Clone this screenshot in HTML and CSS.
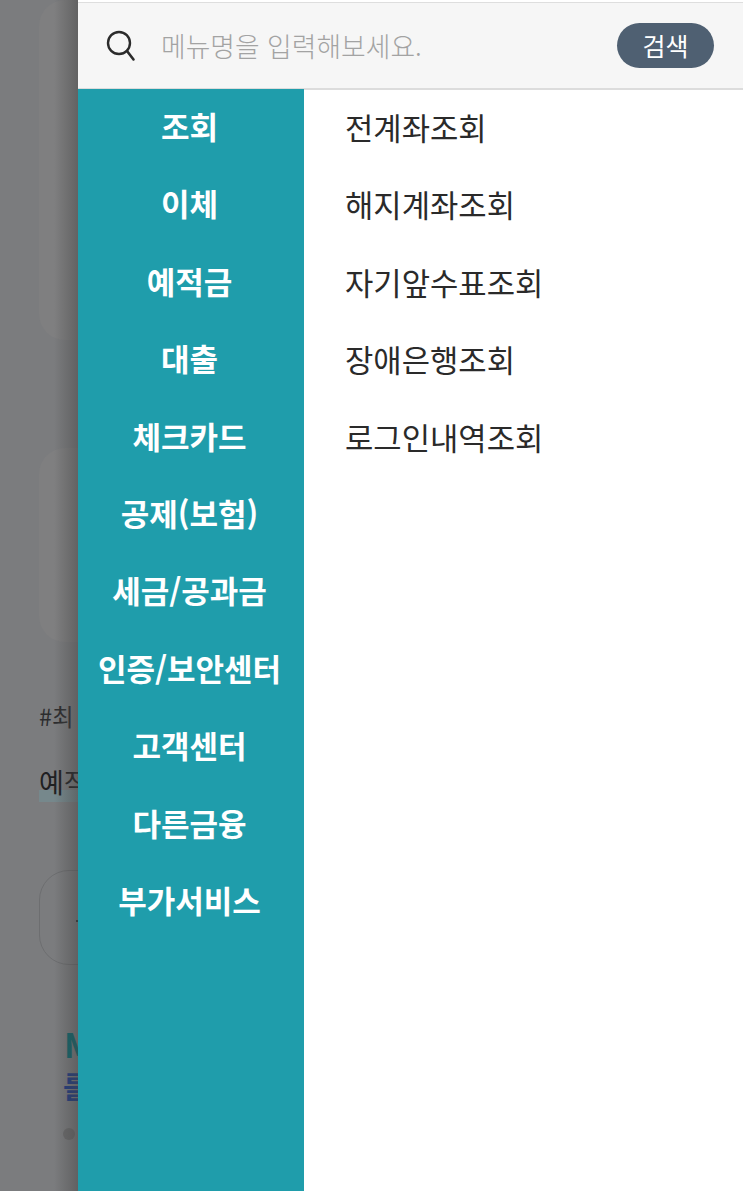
FILE: index.html
```html
<!DOCTYPE html>
<html lang="ko">
<head>
<meta charset="utf-8">
<title>전체메뉴</title>
<link rel="stylesheet" href="styles.css">
</head>
<body>
<div class="page">
  <div class="backdrop">
    <div class="card card-one"></div>
    <div class="card card-two"></div>
    <div class="tag">#최</div>
    <div class="title"><span class="mark">예적금</span></div>
    <div class="outline"><span class="outline-tick"></span></div>
    <div class="logo-top">M</div>
    <div class="logo-bottom">를</div>
    <div class="dot"></div>
  </div>
  <div class="drawer">
    <div class="search">
      <svg class="search-icon" viewBox="0 0 32 32" width="32" height="32" aria-hidden="true">
        <circle cx="14" cy="13" r="11" fill="none" stroke="#2b2b2b" stroke-width="2.4"/>
        <path d="M22 21 L28.5 29.5" fill="none" stroke="#2b2b2b" stroke-width="2.6" stroke-linecap="round"/>
      </svg>
      <span class="placeholder">메뉴명을 입력해보세요.</span>
      <span class="search-btn">검색</span>
    </div>
    <div class="columns">
      <nav class="side">
        <div class="side-item">조회</div>
        <div class="side-item">이체</div>
        <div class="side-item">예적금</div>
        <div class="side-item">대출</div>
        <div class="side-item">체크카드</div>
        <div class="side-item">공제(보험)</div>
        <div class="side-item">세금/공과금</div>
        <div class="side-item">인증/보안센터</div>
        <div class="side-item">고객센터</div>
        <div class="side-item">다른금융</div>
        <div class="side-item">부가서비스</div>
      </nav>
      <div class="sub">
        <div class="sub-item">전계좌조회</div>
        <div class="sub-item">해지계좌조회</div>
        <div class="sub-item">자기앞수표조회</div>
        <div class="sub-item">장애은행조회</div>
        <div class="sub-item">로그인내역조회</div>
      </div>
    </div>
  </div>
</div>
</body>
</html>
```
FILE: styles.css
```css
* { box-sizing: border-box; }
html, body { margin: 0; padding: 0; }
body {
  width: 743px;
  height: 1191px;
  overflow: hidden;
  font-family: "Noto Sans CJK KR", "Noto Sans", sans-serif;
}
.page { display: flex; width: 743px; height: 1191px; }

.backdrop {
  position: relative;
  flex: 0 0 78px;
  height: 1191px;
  overflow: hidden;
  background: #7b7c7e;
  padding-left: 39px;
  display: flex;
  flex-direction: column;
  align-items: flex-start;
}
.backdrop::after {
  content: "";
  position: absolute;
  top: 0;
  right: 0;
  bottom: 0;
  width: 24px;
  background: linear-gradient(to right, rgba(70,70,70,0), rgba(70,70,70,0.5));
}
.card { flex: none; width: 300px; background: #7f7f80; border-radius: 26px; }
.card-one { height: 340px; }
.card-two { height: 194px; margin-top: 108px; }
.tag {
  flex: none;
  margin-top: 59px;
  height: 30px;
  font-size: 23.5px;
  line-height: 30px;
  color: #2c2c2e;
  white-space: nowrap;
}
.title {
  flex: none;
  margin-top: 31px;
  height: 40px;
  width: 100px;
  font-size: 27px;
  line-height: 40px;
  color: #1f2022;
  white-space: nowrap;
}
.mark { background: linear-gradient(to bottom, transparent 0, transparent 70%, #76888c 70%, #76888c 100%); padding-bottom: 1px; }
.outline {
  flex: none;
  margin-top: 68px;
  width: 200px;
  height: 95px;
  border: 1px solid #6d6e70;
  border-radius: 30px;
  position: relative;
}
.outline-tick { position: absolute; left: 36px; top: 49px; width: 3px; height: 2px; background: #333; }
.logo-top {
  flex: none;
  margin-top: 61px;
  margin-left: 25px;
  height: 36px;
  font-size: 34px;
  line-height: 36px;
  font-weight: 700;
  color: #0b666c;
}
.logo-bottom {
  flex: none;
  margin-top: 6px;
  margin-left: 24px;
  height: 34px;
  font-size: 30px;
  line-height: 34px;
  font-weight: 700;
  color: #1e3a80;
}
.dot {
  flex: none;
  margin-top: 26px;
  margin-left: 24px;
  width: 12px;
  height: 12px;
  border-radius: 50%;
  background: #6b6b6c;
}

.drawer {
  flex: 1;
  height: 1191px;
  display: flex;
  flex-direction: column;
  background: #fff;
  padding-top: 2px;
}
.search {
  flex: none;
  height: 88px;
  display: flex;
  align-items: center;
  background: #f6f6f6;
  border-top: 1px solid #dedede;
  border-bottom: 2px solid #dcdcdc;
  padding: 0 29px 0 27px;
}
.search-icon { flex: none; width: 32px; height: 32px; }
.placeholder {
  flex: 1;
  margin-left: 24px;
  font-size: 26.8px;
  line-height: 40px;
  font-weight: 300;
  color: #a3a3a3;
  white-space: nowrap;
}
.search-btn {
  flex: none;
  width: 97px;
  height: 45px;
  border-radius: 23px;
  background: #4f6072;
  color: #fff;
  font-size: 25px;
  line-height: 44px;
  text-align: center;
  margin-top: -1px;
}
.columns { flex: 1; display: flex; min-height: 0; margin-top: -1px; }
.side {
  flex: none;
  width: 226px;
  background: #1f9dab;
}
.side-item {
  height: 77.4px;
  line-height: 73.4px;
  text-align: center;
  color: #fff;
  font-size: 31px;
  font-weight: 700;
  white-space: nowrap;
  padding-right: 3px;
}
.sub { flex: 1; padding-left: 41px; }
.sub-item {
  height: 77.4px;
  line-height: 75.4px;
  color: #2a2a2a;
  font-size: 30.8px;
  white-space: nowrap;
}
```
